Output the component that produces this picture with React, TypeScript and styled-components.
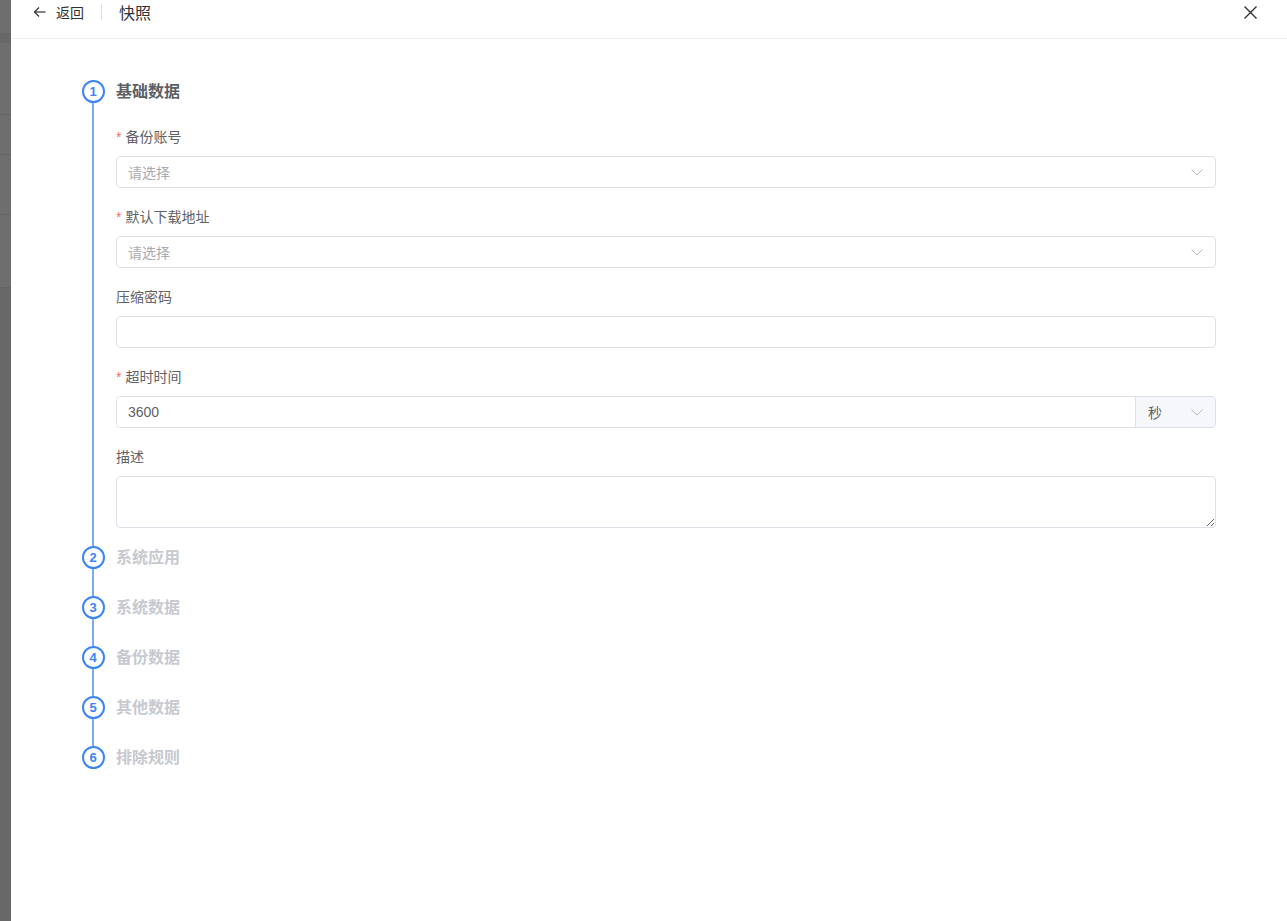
import { FC, ReactNode } from "react";
import styled, { createGlobalStyle } from "styled-components";

const GlobalStyle = createGlobalStyle`
	* {
		box-sizing: border-box;
	}

	html,
	body {
		margin: 0;
		padding: 0;
		height: 100%;
		font-family: "Liberation Sans", "Noto Sans CJK SC", sans-serif;
		background: #fff;
	}
`;

interface IStep {
	index: number;
	title: string;
}

const STEPS: IStep[] = [
	{ index: 2, title: "系统应用" },
	{ index: 3, title: "系统数据" },
	{ index: 4, title: "备份数据" },
	{ index: 5, title: "其他数据" },
	{ index: 6, title: "排除规则" },
];

const ArrowLeftIcon = () => (
	<svg width="14" height="14" viewBox="0 0 14 14" fill="none" stroke="#303133" strokeWidth="1.2">
		<path d="M1.5 7h11" />
		<path d="M6 2.5 1.5 7 6 11.5" />
	</svg>
);

const CloseIcon = () => (
	<svg width="13" height="13" viewBox="0 0 13 13" fill="none" stroke="#303133" strokeWidth="1.4">
		<path d="M0.5 0.5l12 12M12.5 0.5l-12 12" />
	</svg>
);

const ChevronIcon = () => (
	<svg width="12" height="7" viewBox="0 0 12 7" fill="none" stroke="#b6b9c0" strokeWidth="1">
		<path d="M0.5 0.5 6 6 11.5 0.5" />
	</svg>
);

interface IStepProps {
	index: number;
	title: string;
	active?: boolean;
	last?: boolean;
	children?: ReactNode;
}

const Step: FC<IStepProps> = ({ index, title, active, last, children }) => (
	<StepRow>
		<Rail>
			<Circle>{index}</Circle>
			{!last && <RailLine />}
		</Rail>
		<StepBody $last={last}>
			<StepTitle $active={active}>{title}</StepTitle>
			{children}
		</StepBody>
	</StepRow>
);

const App: FC = () => {
	return (
		<>
			<GlobalStyle />
			<Screen>
				<Backdrop>
					<BackdropBand $height={33} />
					<BackdropBand $height={10} $dark />
					<BackdropBand $height={72} $line />
					<BackdropBand $height={40} $line />
					<BackdropBand $height={60} $line />
					<BackdropBand $height={73} $line />
					<BackdropBand $height={0} $dark $grow />
				</Backdrop>

				<Drawer>
					<Header>
						<BackButton type="button">
							<ArrowLeftIcon />
							<span>返回</span>
						</BackButton>
						<HeaderDivider />
						<HeaderTitle>快照</HeaderTitle>
						<CloseButton type="button" aria-label="close">
							<CloseIcon />
						</CloseButton>
					</Header>

					<Body>
						<Step index={1} title="基础数据" active>
							<Form>
								<FormItem>
									<Label $required>备份账号</Label>
									<Select>
										<Placeholder>请选择</Placeholder>
										<ChevronIcon />
									</Select>
								</FormItem>

								<FormItem>
									<Label $required>默认下载地址</Label>
									<Select>
										<Placeholder>请选择</Placeholder>
										<ChevronIcon />
									</Select>
								</FormItem>

								<FormItem>
									<Label>压缩密码</Label>
									<Input type="text" />
								</FormItem>

								<FormItem>
									<Label $required>超时时间</Label>
									<InputGroup>
										<GroupInput type="text" defaultValue="3600" />
										<Append>
											<span>秒</span>
											<ChevronIcon />
										</Append>
									</InputGroup>
								</FormItem>

								<FormItem>
									<Label>描述</Label>
									<TextArea />
								</FormItem>
							</Form>
						</Step>

						{STEPS.map((step, i) => (
							<Step
								key={step.index}
								index={step.index}
								title={step.title}
								last={i === STEPS.length - 1}
							/>
						))}
					</Body>
				</Drawer>
			</Screen>
		</>
	);
};

export default App;

const Screen = styled.div`
	display: flex;
	width: 100%;
	height: 100vh;
	overflow: hidden;
`;

const Backdrop = styled.div`
	display: flex;
	flex-direction: column;
	width: 11px;
	flex-shrink: 0;
	background: #6e6e6e;
`;

const BackdropBand = styled.div<{ $height: number; $dark?: boolean; $line?: boolean; $grow?: boolean }>`
	height: ${({ $height }) => $height}px;
	flex: ${({ $grow }) => ($grow ? 1 : "none")};
	background: ${({ $dark }) => ($dark ? "#686868" : "#6e6e6e")};
	border-bottom: ${({ $line }) => ($line ? "1px solid #646464" : "none")};
`;

const Drawer = styled.div`
	flex: 1;
	display: flex;
	flex-direction: column;
	background: #fff;
`;

const Header = styled.header`
	display: flex;
	align-items: center;
	height: 39px;
	padding: 0 30px 14px 22px;
	border-bottom: 1px solid #ebeef5;
`;

const BackButton = styled.button`
	display: flex;
	align-items: center;
	gap: 9px;
	padding: 0;
	border: none;
	background: none;
	font-family: inherit;
	font-size: 14px;
	color: #303133;
	cursor: pointer;
`;

const HeaderDivider = styled.span`
	width: 1px;
	height: 16px;
	margin: 0 17px 0 17px;
	background: #dcdfe6;
`;

const HeaderTitle = styled.span`
	font-size: 16px;
	color: #303133;
`;

const CloseButton = styled.button`
	display: flex;
	margin-left: auto;
	padding: 0;
	border: none;
	background: none;
	cursor: pointer;
`;

const Body = styled.div`
	padding: 41px 71px;
`;

const StepRow = styled.div`
	display: flex;
	gap: 12px;
`;

const Rail = styled.div`
	display: flex;
	flex-direction: column;
	align-items: center;
	width: 22px;
	flex-shrink: 0;
`;

const Circle = styled.div`
	display: flex;
	align-items: center;
	justify-content: center;
	width: 23px;
	height: 23px;
	border: 2px solid #3a84f5;
	border-radius: 50%;
	font-size: 13px;
	font-weight: 700;
	color: #3a84f5;
`;

const RailLine = styled.div`
	flex: 1;
	width: 2px;
	background: #79aaf6;
`;

const StepBody = styled.div<{ $last?: boolean }>`
	flex: 1;
	padding-bottom: ${({ $last }) => ($last ? 0 : 27)}px;
`;

const StepTitle = styled.div<{ $active?: boolean }>`
	line-height: 23px;
	font-size: 16px;
	font-weight: 700;
	color: ${({ $active }) => ($active ? "#5c6067" : "#c6c9cf")};
`;

const Form = styled.div`
	display: flex;
	flex-direction: column;
	margin-top: 23px;
	margin-bottom: -27px;
`;

const FormItem = styled.div`
	display: flex;
	flex-direction: column;
	margin-bottom: 18px;
`;

const Label = styled.label<{ $required?: boolean }>`
	margin-bottom: 8px;
	line-height: 22px;
	font-size: 14px;
	color: #606266;

	&::before {
		content: ${({ $required }) => ($required ? '"*"' : "none")};
		margin-right: 4px;
		color: #f56c6c;
	}
`;

const Select = styled.div`
	display: flex;
	align-items: center;
	justify-content: space-between;
	height: 32px;
	padding: 0 12px 0 11px;
	border: 1px solid #dcdfe6;
	border-radius: 4px;
	font-size: 14px;
`;

const Placeholder = styled.span`
	color: #a8abb2;
`;

const Input = styled.input`
	height: 32px;
	padding: 0 11px;
	border: 1px solid #dcdfe6;
	border-radius: 4px;
	font-family: inherit;
	font-size: 14px;
	color: #606266;
	outline: none;
`;

const InputGroup = styled.div`
	display: flex;
	height: 32px;
	border: 1px solid #dcdfe6;
	border-radius: 4px;
	overflow: hidden;
`;

const GroupInput = styled.input`
	flex: 1;
	min-width: 0;
	padding: 0 11px;
	border: none;
	font-family: inherit;
	font-size: 14px;
	color: #606266;
	outline: none;
`;

const Append = styled.div`
	display: flex;
	align-items: center;
	justify-content: space-between;
	width: 80px;
	padding: 0 12px;
	border-left: 1px solid #dcdfe6;
	background: #f5f7fa;
	font-size: 14px;
	color: #606266;
`;

const TextArea = styled.textarea`
	height: 52px;
	padding: 5px 11px;
	border: 1px solid #dcdfe6;
	border-radius: 4px;
	font-family: inherit;
	font-size: 14px;
	color: #606266;
	outline: none;
	resize: vertical;
`;
